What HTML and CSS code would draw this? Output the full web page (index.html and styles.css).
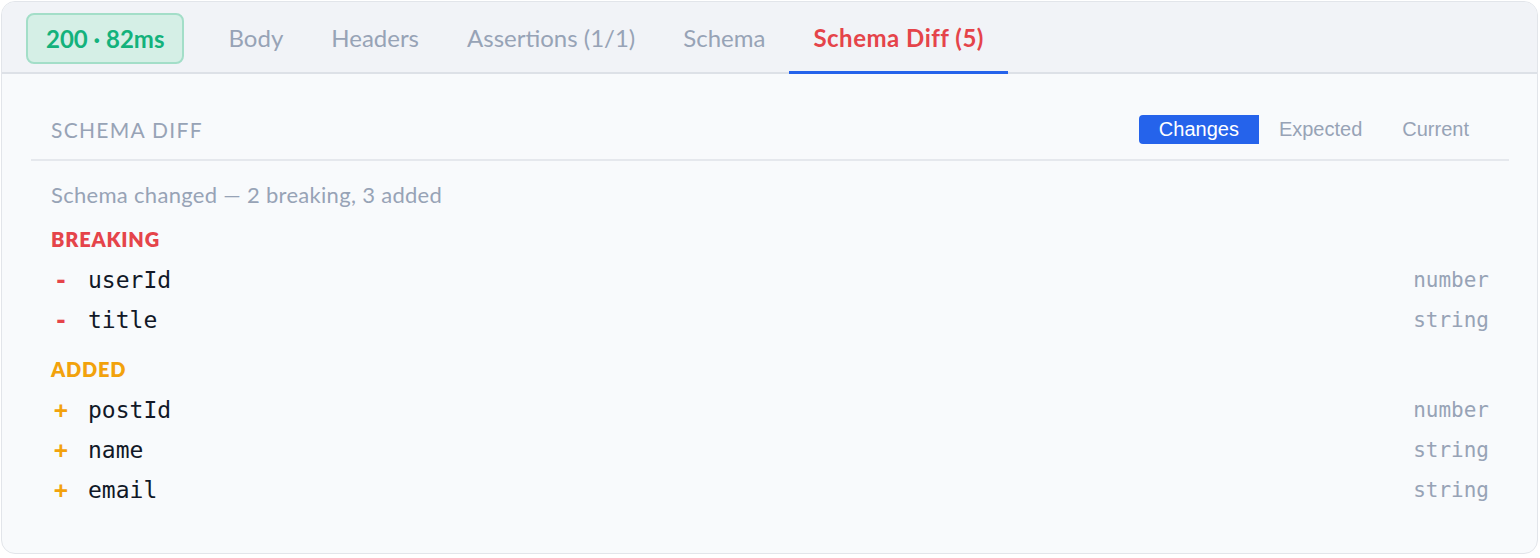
FILE: index.html
```html
<!DOCTYPE html>
<html>
<head>
<meta charset="utf-8">
<link rel="stylesheet" href="styles.css">
</head>
<body>
<div class="card">
  <div class="tabbar">
    <div class="badge">200 · 82ms</div>
    <div class="tab">Body</div>
    <div class="tab">Headers</div>
    <div class="tab">Assertions (1/1)</div>
    <div class="tab">Schema</div>
    <div class="tab active">Schema Diff (5)</div>
  </div>
  <div class="content">
    <div class="panel-head">
      <div class="panel-title">SCHEMA DIFF</div>
      <div class="seg">
        <div class="seg-btn on">Changes</div>
        <div class="seg-btn">Expected</div>
        <div class="seg-btn">Current</div>
      </div>
    </div>
    <div class="summary">Schema changed — 2 breaking, 3 added</div>
    <div class="group breaking">
      <div class="group-title">BREAKING</div>
      <div class="row"><span class="sign">-</span><span class="name">userId</span><span class="type">number</span></div>
      <div class="row"><span class="sign">-</span><span class="name">title</span><span class="type">string</span></div>
    </div>
    <div class="group added">
      <div class="group-title">ADDED</div>
      <div class="row"><span class="sign">+</span><span class="name">postId</span><span class="type">number</span></div>
      <div class="row"><span class="sign">+</span><span class="name">name</span><span class="type">string</span></div>
      <div class="row"><span class="sign">+</span><span class="name">email</span><span class="type">string</span></div>
    </div>
  </div>
</div>
</body>
</html>
```
FILE: styles.css
```css
* { box-sizing: border-box; }
html, body { margin: 0; padding: 0; background: #ffffff; }
body { font-family: Lato, "Noto Sans", sans-serif; }

.card {
  margin: 1px 2px 0 1px;
  height: 553px;
  border: 1px solid #e2e5ea;
  border-radius: 14px;
  background: #f8fafc;
  overflow: hidden;
}

.tabbar {
  height: 72px;
  background: #f1f3f7;
  border-bottom: 2px solid #dde1e7;
  display: flex;
  align-items: stretch;
  padding-left: 24px;
}

.badge {
  align-self: center;
  height: 51px;
  margin-top: 2px;
  padding: 0 17px 0 18px;
  display: flex;
  align-items: center;
  background: #d5efe6;
  border: 2px solid #a3dec8;
  border-radius: 8px;
  color: #13b27c;
  font-weight: 700;
  font-size: 24px;
  margin-right: 21px;
}

.tab {
  padding: 0 24px;
  display: flex;
  align-items: center;
  padding-top: 2px;
  font-size: 24px;
  color: #97a3b6;
  border-bottom: 3px solid transparent;
  margin-bottom: -2px;
}
.tab.active {
  color: #e5444a;
  font-weight: 700;
  letter-spacing: 0.5px;
  border-bottom-color: #2563eb;
}

.content {
  padding: 0 28px 0 29px;
}

.panel-head {
  height: 87px;
  display: flex;
  align-items: center;
  justify-content: space-between;
  border-bottom: 2px solid #e5e8ed;
  padding-left: 20px;
  padding-top: 26px;
  padding-right: 20px;
}
.panel-title {
  font-size: 21px;
  letter-spacing: 1.3px;
  color: #97a3b6;
}
.seg {
  display: flex;
  align-items: center;
  font-family: "Liberation Sans", Arial, sans-serif;
  font-size: 20px;
}
.seg-btn {
  color: #97a3b6;
  height: 29px;
  line-height: 29px;
  padding: 0 20px;
}
.seg-btn.on {
  background: #2563eb;
  color: #ffffff;
  border-radius: 4px 0 0 4px;
}

.summary {
  padding-left: 20px;
  margin-top: 20px;
  font-size: 22px;
  letter-spacing: 0.3px;
  color: #97a3b6;
}

.group { padding-left: 20px; padding-right: 20px; }
.group-title {
  font-size: 20px;
  font-weight: 800;
  letter-spacing: 0.8px;
  margin-top: 19px;
  margin-bottom: 9px;
}
.breaking .group-title, .breaking .sign { color: #e5444a; }
.added .group-title, .added .sign { color: #f2a20c; }
.group.added .group-title { margin-top: 17px; }

.row {
  display: flex;
  align-items: center;
  height: 40px;
  font-family: "DejaVu Sans Mono", "Liberation Mono", monospace;
}
.sign {
  width: 37px;
  padding-left: 3px;
  font-size: 23px;
  font-weight: 700;
}
.name {
  flex: 1;
  font-size: 23px;
  color: #111827;
}
.type {
  font-size: 21px;
  color: #97a3b6;
}
```
